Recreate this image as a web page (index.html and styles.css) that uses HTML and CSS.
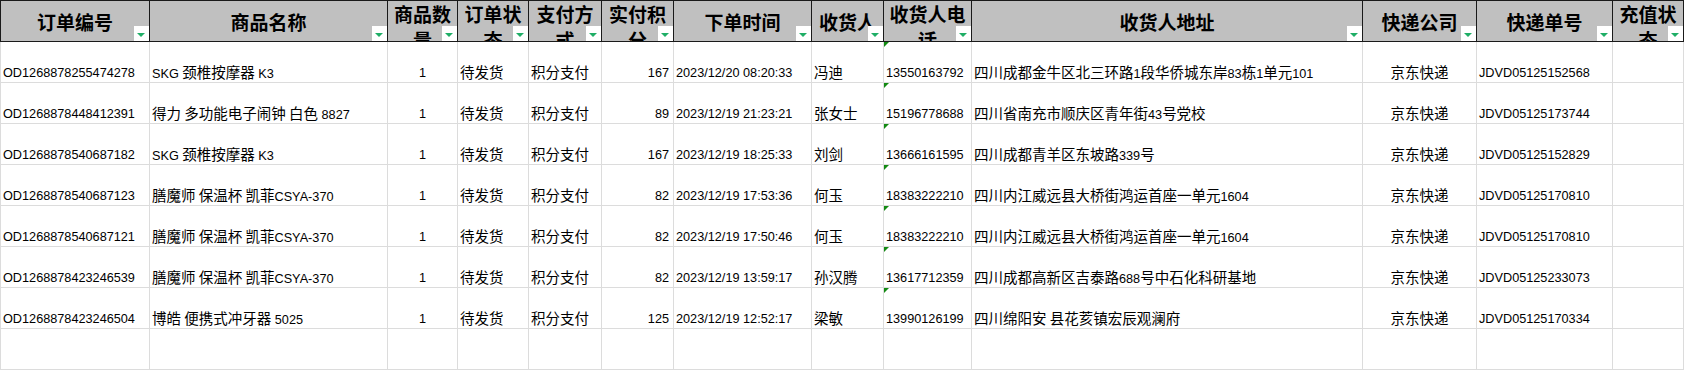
FILE: index.html
```html
<!DOCTYPE html>
<html lang="zh-CN">
<head>
<meta charset="utf-8">
<title>订单</title>
<link rel="stylesheet" href="styles.css">
</head>
<body>
<div class="sheet">
  <div class="row head">
    <div class="h">订单编号<i class="flt"></i></div>
    <div class="h">商品名称<i class="flt"></i></div>
    <div class="h wrap">商品数量<i class="flt"></i></div>
    <div class="h wrap">订单状态<i class="flt"></i></div>
    <div class="h wrap">支付方式<i class="flt"></i></div>
    <div class="h wrap">实付积分<i class="flt"></i></div>
    <div class="h">下单时间<i class="flt"></i></div>
    <div class="h">收货人<i class="flt"></i></div>
    <div class="h wrap">收货人电话<i class="flt"></i></div>
    <div class="h">收货人地址<i class="flt"></i></div>
    <div class="h">快递公司<i class="flt"></i></div>
    <div class="h">快递单号<i class="flt"></i></div>
    <div class="h wrap">充值状态<i class="flt"></i></div>
  </div>

  <div class="row">
    <div class="c en">OD1268878255474278</div>
    <div class="c zh"><span class="l">SKG </span>颈椎按摩器<span class="l"> K3</span></div>
    <div class="c en ctr">1</div>
    <div class="c zh">待发货</div>
    <div class="c zh">积分支付</div>
    <div class="c en num">167</div>
    <div class="c en">2023/12/20 08:20:33</div>
    <div class="c zh">冯迪</div>
    <div class="c en tel">13550163792</div>
    <div class="c zh">四川成都金牛区北三环路<span class="l">1</span>段华侨城东岸<span class="l">83</span>栋<span class="l">1</span>单元<span class="l">101</span></div>
    <div class="c zh ctr">京东快递</div>
    <div class="c en">JDVD05125152568</div>
    <div class="c"></div>
  </div>

  <div class="row">
    <div class="c en">OD1268878448412391</div>
    <div class="c zh">得力 多功能电子闹钟 白色<span class="l"> 8827</span></div>
    <div class="c en ctr">1</div>
    <div class="c zh">待发货</div>
    <div class="c zh">积分支付</div>
    <div class="c en num">89</div>
    <div class="c en">2023/12/19 21:23:21</div>
    <div class="c zh">张女士</div>
    <div class="c en tel">15196778688</div>
    <div class="c zh">四川省南充市顺庆区青年街<span class="l">43</span>号党校</div>
    <div class="c zh ctr">京东快递</div>
    <div class="c en">JDVD05125173744</div>
    <div class="c"></div>
  </div>

  <div class="row">
    <div class="c en">OD1268878540687182</div>
    <div class="c zh"><span class="l">SKG </span>颈椎按摩器<span class="l"> K3</span></div>
    <div class="c en ctr">1</div>
    <div class="c zh">待发货</div>
    <div class="c zh">积分支付</div>
    <div class="c en num">167</div>
    <div class="c en">2023/12/19 18:25:33</div>
    <div class="c zh">刘剑</div>
    <div class="c en tel">13666161595</div>
    <div class="c zh">四川成都青羊区东坡路<span class="l">339</span>号</div>
    <div class="c zh ctr">京东快递</div>
    <div class="c en">JDVD05125152829</div>
    <div class="c"></div>
  </div>

  <div class="row">
    <div class="c en">OD1268878540687123</div>
    <div class="c zh">膳魔师 保温杯 凯菲<span class="l">CSYA-370</span></div>
    <div class="c en ctr">1</div>
    <div class="c zh">待发货</div>
    <div class="c zh">积分支付</div>
    <div class="c en num">82</div>
    <div class="c en">2023/12/19 17:53:36</div>
    <div class="c zh">何玉</div>
    <div class="c en tel">18383222210</div>
    <div class="c zh">四川内江威远县大桥街鸿运首座一单元<span class="l">1604</span></div>
    <div class="c zh ctr">京东快递</div>
    <div class="c en">JDVD05125170810</div>
    <div class="c"></div>
  </div>

  <div class="row">
    <div class="c en">OD1268878540687121</div>
    <div class="c zh">膳魔师 保温杯 凯菲<span class="l">CSYA-370</span></div>
    <div class="c en ctr">1</div>
    <div class="c zh">待发货</div>
    <div class="c zh">积分支付</div>
    <div class="c en num">82</div>
    <div class="c en">2023/12/19 17:50:46</div>
    <div class="c zh">何玉</div>
    <div class="c en tel">18383222210</div>
    <div class="c zh">四川内江威远县大桥街鸿运首座一单元<span class="l">1604</span></div>
    <div class="c zh ctr">京东快递</div>
    <div class="c en">JDVD05125170810</div>
    <div class="c"></div>
  </div>

  <div class="row">
    <div class="c en">OD1268878423246539</div>
    <div class="c zh">膳魔师 保温杯 凯菲<span class="l">CSYA-370</span></div>
    <div class="c en ctr">1</div>
    <div class="c zh">待发货</div>
    <div class="c zh">积分支付</div>
    <div class="c en num">82</div>
    <div class="c en">2023/12/19 13:59:17</div>
    <div class="c zh">孙汉腾</div>
    <div class="c en tel">13617712359</div>
    <div class="c zh">四川成都高新区吉泰路<span class="l">688</span>号中石化科研基地</div>
    <div class="c zh ctr">京东快递</div>
    <div class="c en">JDVD05125233073</div>
    <div class="c"></div>
  </div>

  <div class="row">
    <div class="c en">OD1268878423246504</div>
    <div class="c zh">博皓 便携式冲牙器<span class="l"> 5025</span></div>
    <div class="c en ctr">1</div>
    <div class="c zh">待发货</div>
    <div class="c zh">积分支付</div>
    <div class="c en num">125</div>
    <div class="c en">2023/12/19 12:52:17</div>
    <div class="c zh">梁敏</div>
    <div class="c en tel">13990126199</div>
    <div class="c zh">四川绵阳安 县花荄镇宏辰观澜府</div>
    <div class="c zh ctr">京东快递</div>
    <div class="c en">JDVD05125170334</div>
    <div class="c"></div>
  </div>

  <div class="row">
    <div class="c"></div><div class="c"></div><div class="c"></div><div class="c"></div>
    <div class="c"></div><div class="c"></div><div class="c"></div><div class="c"></div>
    <div class="c"></div><div class="c"></div><div class="c"></div><div class="c"></div>
    <div class="c"></div>
  </div>
</div>
</body>
</html>
```

FILE: styles.css
```css
* { box-sizing: border-box; }

html, body {
  margin: 0;
  padding: 0;
  background: #fff;
}

.sheet {
  width: 1684px;
  --cols: 149px 238px 70px 71px 73px 72px 138px 72px 88px 391px 114px 136px 71px;
}

.row {
  display: grid;
  grid-template-columns: var(--cols);
  height: 41px;
  border-left: 1px solid #dcdcdc;
}

.row.head {
  height: 42px;
  border-left: 1px solid #1a1a1a;
  border-top: 1px solid #1a1a1a;
  background: #c0c0c0;
}

.h {
  position: relative;
  display: flex;
  align-items: center;
  justify-content: center;
  text-align: center;
  overflow: hidden;
  border-right: 1px solid #1a1a1a;
  border-bottom: 1px solid #1a1a1a;
  font-family: "Noto Sans CJK SC", sans-serif;
  font-weight: 700;
  font-size: 19px;
  line-height: 26px;
  color: #000;
  padding-top: 2px;
}

.h.wrap {
  align-items: flex-start;
  padding-top: 0;
}

.flt {
  position: absolute;
  right: 0;
  bottom: 0;
  width: 15px;
  height: 15px;
  background: #fff;
}

.flt::after {
  content: "";
  position: absolute;
  left: 3px;
  top: 7px;
  border-left: 4px solid transparent;
  border-right: 4px solid transparent;
  border-top: 4px solid #1fae66;
}

.c {
  position: relative;
  overflow: hidden;
  white-space: nowrap;
  border-right: 1px solid #dcdcdc;
  border-bottom: 1px solid #dcdcdc;
  padding: 0 2px;
  color: #000;
}

.zh {
  font-family: "Noto Sans CJK SC", sans-serif;
  font-size: 14.5px;
  line-height: 20px;
  padding-top: 20px;
}

.en {
  font-family: "Liberation Sans", Arial, sans-serif;
  font-size: 12.7px;
  line-height: 17px;
  padding-top: 23px;
}

.l {
  font-family: "Liberation Sans", Arial, sans-serif;
  font-size: 12.7px;
  line-height: 1;
}

.ctr { text-align: center; }

.num {
  text-align: right;
  padding-right: 4px;
}

.tel::before {
  content: "";
  position: absolute;
  left: 0;
  top: 0;
  border-top: 5px solid #138a13;
  border-right: 5px solid transparent;
}
```
